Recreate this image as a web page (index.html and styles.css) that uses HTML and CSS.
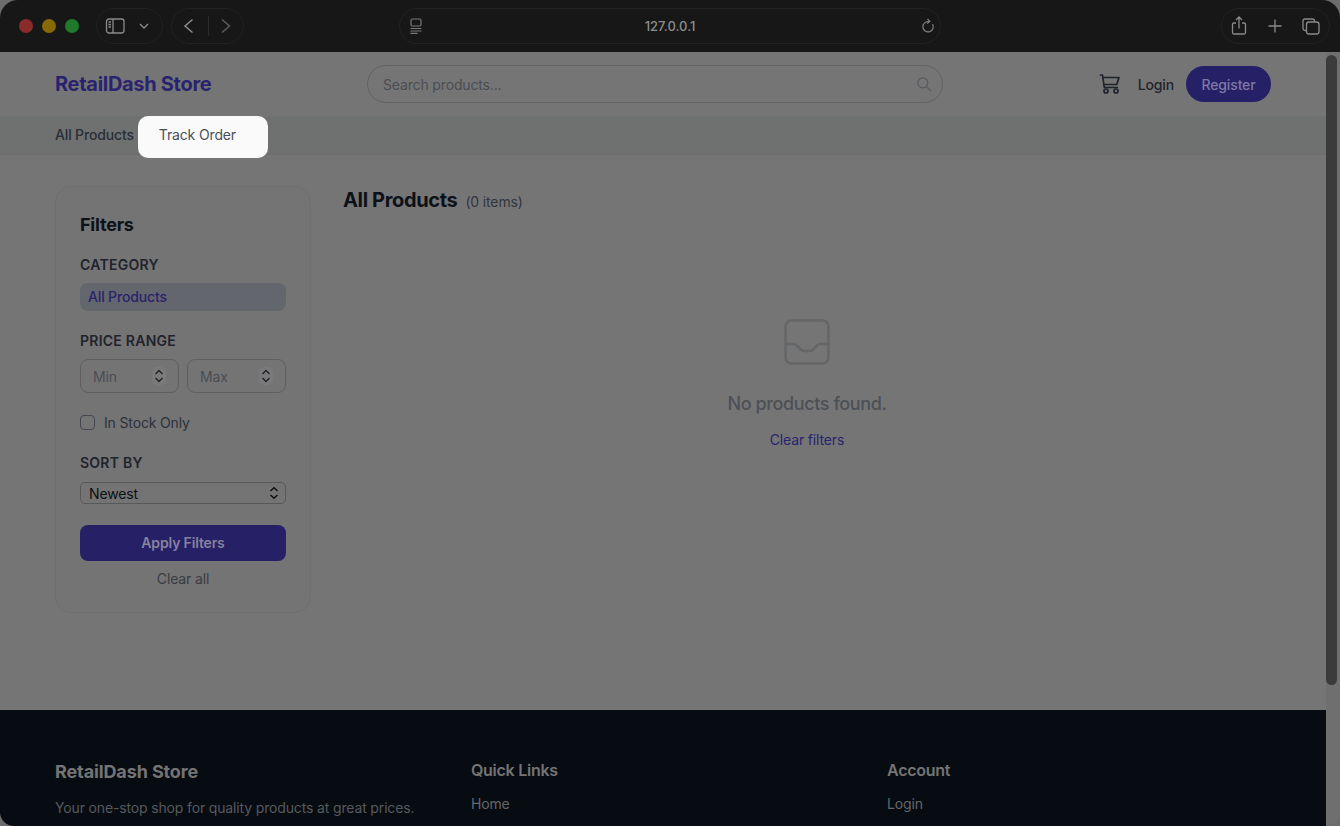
FILE: index.html
```html
<!DOCTYPE html>
<html lang="en">
<head>
    <meta charset="UTF-8">
    <meta name="viewport" content="width=device-width, initial-scale=1.0">
    <title>RetailDash Store</title>
    <link rel="stylesheet" href="styles.css">
</head>
<body>
    <div class="window">
        <!-- browser toolbar -->
        <div class="toolbar">
            <div class="lights">
                <span class="light red"></span>
                <span class="light yellow"></span>
                <span class="light green"></span>
            </div>
            <div class="pill pill-sidebar">
                <svg width="20" height="16" viewBox="0 0 20 16" fill="none" stroke="#8a8a8a" stroke-width="1.3"><rect x="1.500" y="1" width="17.500" height="14" rx="2.5"/><path d="M8 1v14M3.500 4h2.500M3.500 6.500h2.500M3.500 9h2.500"/></svg>
                <svg width="12" height="8" viewBox="0 0 12 8" fill="none" stroke="#8a8a8a" stroke-width="1.400"><path d="M2 2l4 4 4-4"/></svg>
            </div>
            <div class="pill pill-nav">
                <svg width="12" height="16" viewBox="0 0 12 16" fill="none" stroke="#8c8c8c" stroke-width="1.500"><path d="M10.500 1.500L3 8l7.500 6.500"/></svg>
                <span class="pill-sep"></span>
                <svg width="12" height="16" viewBox="0 0 12 16" fill="none" stroke="#5c5c5c" stroke-width="1.500"><path d="M2 1.500L9.500 8 2 14.500"/></svg>
            </div>
            <div class="pill pill-url">
                <svg width="14" height="16" viewBox="0 0 14 16" fill="none" stroke="#7a7a7a" stroke-width="1.200"><rect x="2" y="1" width="10" height="7" rx="1.500"/><path d="M1.500 10.500h11M1.500 13h11M1.500 15.300h7"/></svg>
                <span class="url-text">127.0.0.1</span>
                <svg width="14" height="16" viewBox="0 0 14 16" fill="none" stroke="#7f7f7f" stroke-width="1.200"><path d="M11.500 6a5.200 5.200 0 1 1-3.600-2.400"/><path d="M6.500 1l2.300 2.500-2.700 2"/></svg>
            </div>
            <div class="pill pill-actions">
                <svg width="16" height="20" viewBox="0 0 16 20" fill="none" stroke="#8a8a8a" stroke-width="1.300"><path d="M5 7H3a1.500 1.500 0 0 0-1.500 1.500v8A1.500 1.500 0 0 0 3 18h10a1.500 1.500 0 0 0 1.500-1.500v-8A1.500 1.500 0 0 0 13 7h-2M8 12.500V1.500M5 4l3-3 3 3"/></svg>
                <svg width="14" height="14" viewBox="0 0 14 14" fill="none" stroke="#8a8a8a" stroke-width="1.300"><path d="M7 0.500v13M0.500 7h13"/></svg>
                <svg width="18" height="17" viewBox="0 0 18 17" fill="none" stroke="#8a8a8a" stroke-width="1.300"><rect x="4.500" y="4" width="12.500" height="12" rx="2.500"/><path d="M4.500 12.500H3a2 2 0 0 1-2-2V3a2 2 0 0 1 2-2h7.500a2 2 0 0 1 2 2v1"/></svg>
            </div>
        </div>

        <div class="viewport">
            <div class="page">
                <header class="site-header">
                    <a class="logo">RetailDash Store</a>
                    <div class="search">
                        <span class="search-text">Search products...</span>
                        <svg width="16" height="16" viewBox="0 0 16 16" fill="none" stroke="#565a60" stroke-width="1.200"><circle cx="6.800" cy="6.800" r="5"/><path d="M10.500 10.500l4.500 4.500"/></svg>
                    </div>
                    <div class="header-actions">
                        <svg class="cart" width="22" height="22" viewBox="0 0 22 22" fill="none" stroke="#1f232b" stroke-width="1.700" stroke-linecap="round" stroke-linejoin="round"><path d="M2.500 2h2l1.800 12.500h13"/><path d="M5 4.500h16l-2.300 7H6"/><circle cx="8" cy="18" r="2"/><circle cx="18" cy="18" r="2"/></svg>
                        <a class="login">Login</a>
                        <a class="register">Register</a>
                    </div>
                </header>
                <nav class="site-nav">
                    <a class="nav-link">All Products</a>
                    <a class="nav-link nav-focus">Track Order</a>
                </nav>

                <main class="shop">
                    <aside class="filters">
                        <h2>Filters</h2>
                        <h3>CATEGORY</h3>
                        <div class="cat-active">All Products</div>
                        <h3 class="price-title">PRICE RANGE</h3>
                        <div class="price-row">
                            <div class="num-input">
                                <span>Min</span>
                                <svg class="spin" width="14" height="18" viewBox="0 0 14 18" fill="none" stroke="#1f232b" stroke-width="1.400"><path d="M3.500 7L7 3.500 10.500 7M3.500 11L7 14.500 10.500 11"/></svg>
                            </div>
                            <div class="num-input">
                                <span>Max</span>
                                <svg class="spin" width="14" height="18" viewBox="0 0 14 18" fill="none" stroke="#1f232b" stroke-width="1.400"><path d="M3.500 7L7 3.500 10.500 7M3.500 11L7 14.500 10.500 11"/></svg>
                            </div>
                        </div>
                        <label class="stock"><span class="check"></span>In Stock Only</label>
                        <h3 class="sort-title">SORT BY</h3>
                        <div class="sort-select">
                            <span>Newest</span>
                            <svg width="10" height="14" viewBox="0 0 10 14" fill="none" stroke="#0f1115" stroke-width="1.500"><path d="M1.500 5L5 1.800 8.500 5M1.500 9L5 12.200 8.500 9"/></svg>
                        </div>
                        <button class="apply">Apply Filters</button>
                        <a class="clear-all">Clear all</a>
                    </aside>

                    <section class="results">
                        <div class="results-head">
                            <h1>All Products</h1>
                            <span class="count">(0 items)</span>
                        </div>
                        <div class="empty">
                            <svg width="48" height="48" viewBox="0 0 48 48" fill="none" stroke="#646668" stroke-width="2.500" stroke-linejoin="round"><rect x="2.500" y="2.500" width="43" height="43" rx="6"/><path d="M2.500 26h8c2 0 3 1 4.500 2.500l3 3c1 1 2 1.500 3.500 1.500h5c1.500 0 2.500-.5 3.500-1.500l3-3C34 27 35 26 37 26h8.500"/></svg>
                            <p class="empty-text">No products found.</p>
                            <a class="clear-filters">Clear filters</a>
                        </div>
                    </section>
                </main>

                <footer class="site-footer">
                    <div class="foot-col">
                        <h4 class="foot-logo">RetailDash Store</h4>
                        <p class="foot-desc">Your one-stop shop for quality products at great prices.</p>
                    </div>
                    <div class="foot-col">
                        <h4>Quick Links</h4>
                        <a>Home</a>
                    </div>
                    <div class="foot-col">
                        <h4>Account</h4>
                        <a>Login</a>
                    </div>
                </footer>
            </div>
            <div class="scroll-track"><div class="scroll-thumb"></div></div>
        </div>
    </div>
</body>
</html>
```

FILE: styles.css
```css
* {
    box-sizing: border-box;
}

body {
    margin: 0;
    width: 1340px;
    height: 826px;
    overflow: hidden;
    background: #6c6c6c;
    font-family: Inter, "Liberation Sans", sans-serif;
    letter-spacing: -0.15px;
    color: #3b3f47;
}

.window {
    height: 826px;
    display: flex;
    flex-direction: column;
    overflow: hidden;
    border-radius: 18px 18px 14px 14px;
}

/* Browser toolbar */
.toolbar {
    height: 52px;
    flex: none;
    display: flex;
    align-items: center;
    background: #171717;
    padding: 0 10px 0 19px;
}
.lights {
    display: flex;
    gap: 9px;
    width: 77px;
    flex: none;
}
.light {
    width: 14px;
    height: 14px;
    border-radius: 50%;
}
.red { background: #8a2b2b; }
.yellow { background: #876a06; }
.green { background: #1f7a2c; }

.pill {
    height: 36px;
    flex: none;
    display: flex;
    align-items: center;
    border: 1px solid #222;
    border-radius: 18px;
}
.pill-sidebar {
    width: 67px;
    padding: 0 12px 0 8px;
    justify-content: space-between;
}
.pill-nav {
    width: 73px;
    margin-left: 8px;
    padding: 0 11px 0 10px;
    justify-content: space-between;
}
.pill-sep {
    width: 1px;
    height: 20px;
    margin-left: 3px;
    background: #2b2b2b;
}
.pill-url {
    width: 542px;
    margin-left: 155px;
    padding: 0 5px 0 9px;
    justify-content: space-between;
}
.url-text {
    margin-right: 4px;
    font-size: 13px;
    font-weight: 500;
    letter-spacing: 0;
    color: #8d8d8d;
}
.pill-actions {
    width: 109px;
    margin-left: 280px;
    padding: 0 9px 0 9px;
    justify-content: space-between;
}

.viewport {
    flex: 1;
    display: flex;
    min-height: 0;
}
.page {
    width: 1326px;
    flex: none;
    display: flex;
    flex-direction: column;
    background: #757575;
}
.scroll-track {
    flex: 1;
    background: #6f6f6f;
    padding: 3px 3px 0 0;
}
.scroll-thumb {
    height: 630px;
    background: #3b3b3b;
    border-radius: 6px;
}

/* Site header */
.site-header {
    height: 64px;
    flex: none;
    display: flex;
    align-items: center;
    padding: 0 55px;
}
.logo {
    width: 312px;
    font-size: 20px;
    font-weight: 700;
    letter-spacing: -0.3px;
    color: #29236f;
}
.search {
    width: 576px;
    height: 38px;
    margin-top: -1px;
    display: flex;
    align-items: center;
    justify-content: space-between;
    padding: 0 10px 0 15px;
    border: 1px solid #626262;
    border-radius: 19px;
}
.search-text {
    margin-top: 2px;
    font-size: 14px;
    color: #4a4d53;
}
.header-actions {
    display: flex;
    align-items: center;
    margin-left: auto;
}
.cart {
    margin-right: 18px;
}
.login {
    font-size: 14px;
    font-weight: 500;
    color: #1f232b;
    margin-right: 12px;
}
.register {
    width: 85px;
    height: 36px;
    display: flex;
    align-items: center;
    justify-content: center;
    border-radius: 18px;
    background: #262066;
    color: #7d79a8;
    font-size: 14px;
    font-weight: 500;
}

/* Nav strip */
.site-nav {
    height: 39px;
    flex: none;
    display: flex;
    align-items: flex-start;
    padding-left: 55px;
    background: #6e716f;
    border-top: 1px solid #707372;
    border-bottom: 1px solid #6a6d6c;
}
.nav-link {
    line-height: 36px;
    font-size: 14px;
    font-weight: 500;
    color: #2a2e36;
}
.nav-focus {
    width: 130px;
    height: 42px;
    margin: -1px 0 0 4px;
    padding-left: 21px;
    line-height: 38px;
    font-weight: 400;
    color: #4b4f57;
    background: #f9faf9;
    border-radius: 10px;
}

/* Shop */
.shop {
    flex: 1;
    display: flex;
    align-items: flex-start;
    padding: 31px 55px 0;
}
.filters {
    width: 256px;
    height: 427px;
    flex: none;
    padding: 26px 24px 0;
    background: #747474;
    border: 1px solid #6f6f6f;
    border-radius: 16px;
}
.filters h2 {
    margin: 0;
    font-size: 18px;
    line-height: 24px;
    font-weight: 700;
    letter-spacing: -0.2px;
    color: #0d1118;
}
.filters h3 {
    margin: 19px 0 0;
    font-size: 14px;
    line-height: 18px;
    font-weight: 600;
    letter-spacing: 0.25px;
    color: #1f232b;
}
.cat-active {
    height: 28px;
    margin-top: 9px;
    padding-left: 8px;
    line-height: 28px;
    font-size: 14px;
    font-weight: 500;
    color: #29236f;
    background: #64666d;
    border-radius: 8px;
}
.filters .price-title {
    margin-top: 21px;
}
.price-row {
    display: flex;
    gap: 8px;
    margin-top: 9px;
}
.num-input {
    flex: 1;
    height: 34px;
    display: flex;
    align-items: center;
    justify-content: space-between;
    padding: 0 12px 0 12px;
    font-size: 14px;
    color: #4a4d53;
    border: 1px solid #5f5f5f;
    border-radius: 8px;
}
.spin {
    background: #7a7a7a;
    border-radius: 5px;
}
.stock {
    display: flex;
    align-items: center;
    gap: 9px;
    margin-top: 20px;
    height: 18px;
    font-size: 14px;
    color: #2d3139;
}
.check {
    width: 15px;
    height: 15px;
    border: 1.500px solid #44474d;
    border-radius: 4px;
}
.filters .sort-title {
    margin-top: 23px;
}
.sort-select {
    height: 22px;
    margin-top: 10px;
    display: flex;
    align-items: center;
    justify-content: space-between;
    padding: 0 6px 0 8px;
    font-size: 14px;
    color: #0d0f13;
    border: 1px solid #585858;
    border-radius: 5px;
}
.apply {
    display: block;
    width: 100%;
    height: 36px;
    margin-top: 21px;
    padding: 0 0 2px;
    border: 0;
    border-radius: 8px;
    background: #262066;
    color: #85829f;
    font-family: inherit;
    font-size: 14px;
    font-weight: 600;
    letter-spacing: -0.15px;
}
.clear-all {
    display: block;
    margin-top: 9px;
    text-align: center;
    font-size: 14px;
    line-height: 18px;
    color: #393c43;
}

/* Results */
.results {
    flex: 1;
    padding-left: 32px;
}
.results-head {
    display: flex;
    align-items: baseline;
    gap: 8px;
    margin-top: 1px;
}
.results h1 {
    margin: 0;
    font-size: 20px;
    line-height: 26px;
    font-weight: 700;
    letter-spacing: -0.35px;
    color: #0d1118;
}
.count {
    font-size: 14px;
    color: #33363d;
}
.empty {
    margin-top: 105px;
    display: flex;
    flex-direction: column;
    align-items: center;
}
.empty-text {
    margin: 24px 0 0;
    font-size: 18px;
    line-height: 28px;
    font-weight: 500;
    letter-spacing: -0.4px;
    color: #4c5057;
}
.clear-filters {
    margin-top: 13px;
    font-size: 14px;
    line-height: 18px;
    color: #29236f;
}

/* Footer */
.site-footer {
    height: 116px;
    flex: none;
    display: grid;
    grid-template-columns: repeat(3, 384px);
    column-gap: 32px;
    padding: 49px 55px 0;
    background: #070c13;
}
.foot-col h4 {
    margin: 0;
    font-size: 16px;
    line-height: 22px;
    font-weight: 600;
    letter-spacing: -0.27px;
    color: #747474;
}
.foot-col .foot-logo {
    margin-top: 1px;
    font-size: 18px;
    font-weight: 700;
    line-height: 24px;
    letter-spacing: -0.12px;
}
.foot-col a {
    display: block;
    margin-top: 14px;
    font-size: 14px;
    line-height: 18px;
    color: #646669;
}
.foot-desc {
    margin: 15px 0 0;
    font-size: 14px;
    line-height: 18px;
    white-space: nowrap;
    color: #56595d;
}
```
